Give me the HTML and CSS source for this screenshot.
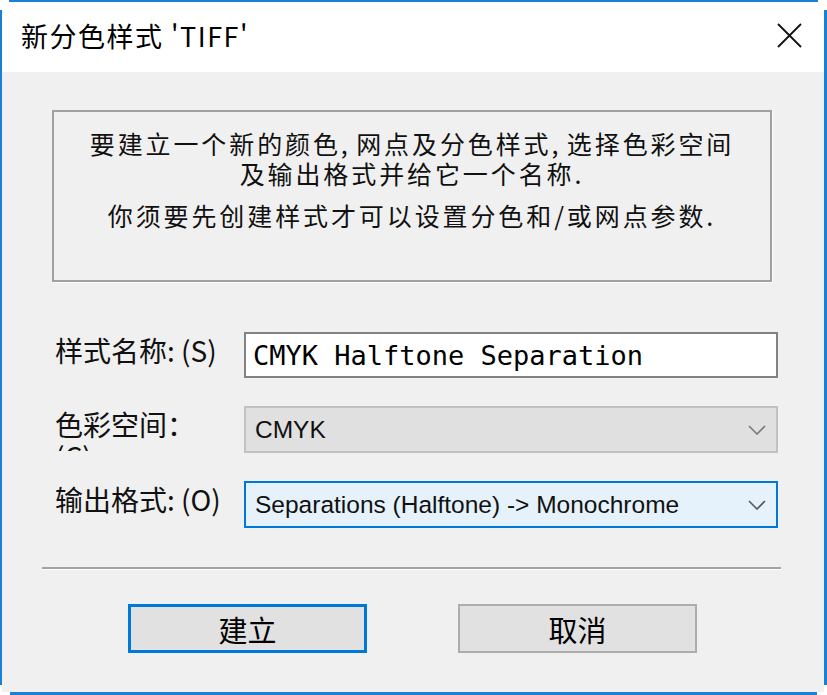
FILE: index.html
```html
<!DOCTYPE html>
<html lang="zh-CN">
<head>
    <meta charset="UTF-8">
    <title>新分色样式 'TIFF'</title>
    <link rel="stylesheet" href="styles.css">
</head>
<body>
    <div class="window">
        <div class="titlebar">
            <span class="title">新分色样式 'TIFF'</span>
            <svg class="close" width="25" height="25" viewBox="0 0 25 25">
                <path d="M1 1 L24 24 M24 1 L1 24" stroke="#111" stroke-width="1.8" fill="none"/>
            </svg>
        </div>

        <div class="dialog-body">
            <div class="info">
                <p>要建立一个新的颜色, 网点及分色样式, 选择色彩空间<br>及输出格式并给它一个名称.</p>
                <p>你须要先创建样式才可以设置分色和/或网点参数.</p>
            </div>

            <div class="form">
                <div class="row">
                    <label class="label">样式名称: (S)</label>
                    <div class="textbox">CMYK Halftone Separation</div>
                </div>
                <div class="row">
                    <label class="label clip">色彩空间：<br>(C)</label>
                    <div class="combo disabled">
                        <span>CMYK</span>
                        <svg class="chevron" width="18" height="10" viewBox="0 0 18 10">
                            <polyline points="1,1 9,9 17,1" stroke="#7a7a7a" stroke-width="1.6" fill="none"/>
                        </svg>
                    </div>
                </div>
                <div class="row">
                    <label class="label">输出格式: (O)</label>
                    <div class="combo focused">
                        <span>Separations (Halftone) -&gt; Monochrome</span>
                        <svg class="chevron" width="18" height="10" viewBox="0 0 18 10">
                            <polyline points="1,1 9,9 17,1" stroke="#555" stroke-width="1.6" fill="none"/>
                        </svg>
                    </div>
                </div>
            </div>

            <div class="separator"></div>

            <div class="buttons">
                <button class="btn default">建立</button>
                <button class="btn">取消</button>
            </div>
        </div>
    </div>
</body>
</html>
```

FILE: styles.css
```css
body {
    margin: 0;
    font-family: "Noto Sans CJK SC", "Liberation Sans", sans-serif;
    color: #111;
    background-color: #fff;
}
.window {
    width: 827px;
    height: 695px;
    box-sizing: border-box;
    padding: 2px 3px 3px 2px;
    display: flex;
    flex-direction: column;
    background:
        linear-gradient(#1a80d6, #1a80d6) center top / calc(100% - 18px) 2px no-repeat,
        linear-gradient(#1a80d6, #1a80d6) center bottom / calc(100% - 20px) 3px no-repeat,
        linear-gradient(#1a80d6, #1a80d6) left center / 2px calc(100% - 20px) no-repeat,
        linear-gradient(#1a80d6, #1a80d6) right center / 3px calc(100% - 20px) no-repeat,
        #fff;
}
.titlebar {
    height: 70px;
    box-sizing: border-box;
    padding: 0 22px 4px 19px;
    display: flex;
    align-items: center;
    justify-content: space-between;
    background-color: #fff;
}
.title {
    font-size: 27px;
    letter-spacing: 1.5px;
    color: #000;
}
.dialog-body {
    flex: 1;
    background-color: #f0f0f0;
}
.info {
    margin: 38px 52px 0 50px;
    height: 172px;
    box-sizing: border-box;
    padding-top: 16px;
    border: 2px solid #a0a0a0;
    box-shadow: 1px 1px 0 #fff;
    text-align: center;
    font-size: 25px;
    letter-spacing: 2.9px;
    word-spacing: -3px;
    line-height: 30px;
}
.info p {
    margin: 0 0 12px;
}
.form {
    margin-top: 50px;
    padding: 0 46px 0 53px;
    display: flex;
    flex-direction: column;
    gap: 28px;
}
.row {
    display: flex;
    align-items: flex-start;
}
.label {
    flex: 0 0 189px;
    padding-top: 2px;
    font-size: 28px;
    line-height: 32px;
}
.label.clip {
    height: 45px;
    box-sizing: border-box;
    overflow: hidden;
}
.textbox {
    flex: 1;
    height: 46px;
    box-sizing: border-box;
    padding-left: 7px;
    border: 2px solid #828282;
    background-color: #fff;
    display: flex;
    align-items: center;
    font-family: "DejaVu Sans Mono", "Liberation Mono", monospace;
    font-size: 27px;
    color: #000;
}
.combo {
    flex: 1;
    height: 47px;
    box-sizing: border-box;
    padding: 0 10px 0 9px;
    display: flex;
    align-items: center;
    justify-content: space-between;
    font-family: "Liberation Sans", sans-serif;
    font-size: 24.5px;
    color: #111;
}
.combo.disabled {
    background-color: #e0e0e0;
    border: 2px solid #c2c2c2;
}
.combo.focused {
    background-color: #e5f1fb;
    border: 2px solid #0078d7;
}
.separator {
    margin: 39px 43px 0 40px;
    border-top: 2px solid #a3a3a3;
    border-bottom: 1px solid #fff;
}
.buttons {
    margin-top: 34px;
    padding-left: 126px;
    display: flex;
    align-items: center;
    gap: 91px;
}
.btn {
    width: 239px;
    height: 49px;
    box-sizing: border-box;
    border: 2px solid #adadad;
    background-color: #e1e1e1;
    font-family: "Noto Sans CJK SC", sans-serif;
    font-size: 29px;
    color: #000;
    padding: 0;
}
.btn.default {
    border: 3px solid #0078d7;
}
```
